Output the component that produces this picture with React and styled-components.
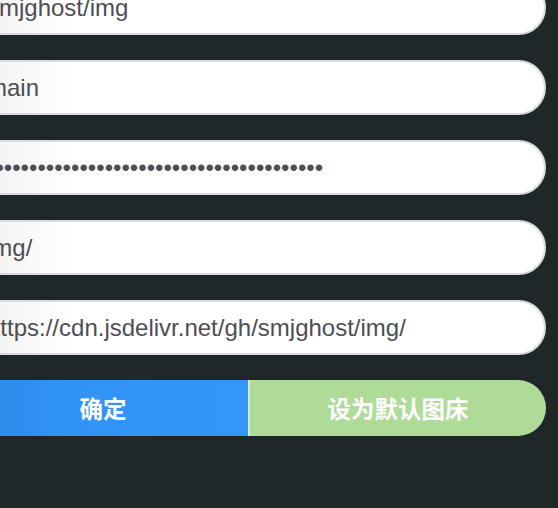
import React from "react";
import styled, { createGlobalStyle } from "styled-components";

const Global = createGlobalStyle`
  html, body {
    margin: 0;
    padding: 0;
    background: #1f2729;
    overflow: hidden;
  }
  body {
    width: 558px;
    height: 508px;
  }
`;

const Form = styled.div`
  display: flex;
  flex-direction: column;
  gap: 25px;
  width: 596px;
  margin: -20px 0 0 -50px;
`;

const Field = styled.input`
  box-sizing: border-box;
  display: block;
  width: 100%;
  height: 55px;
  margin: 0;
  padding: 0 0 0 35px;
  border: 2px solid #d8dbe2;
  border-radius: 0 28px 28px 0;
  background: linear-gradient(to right, #e6e6e6 0px, #f6f6f6 60px, #ffffff 120px);
  font-family: "Liberation Sans", Arial, sans-serif;
  font-size: 24px;
  color: #4e4e54;
  outline: none;
`;

const ButtonRow = styled.div`
  display: flex;
  height: 56px;
`;

const Button = styled.button`
  box-sizing: border-box;
  margin: 0;
  border: none;
  height: 100%;
  color: #ffffff;
  font-family: "Liberation Sans", "Noto Sans CJK SC", sans-serif;
  font-weight: bold;
  font-size: 23.5px;
  cursor: pointer;
`;

const ConfirmButton = styled(Button)`
  flex: 0 0 298px;
  padding: 0 0 0 8px;
  background: linear-gradient(to right, #2a86e2 0px, #3193f6 110px, #3396f8 100%);
`;

const DefaultButton = styled(Button)`
  flex: 1;
  padding: 0;
  background: #afdb98;
  border-left: 2px solid #d7eecb;
  border-radius: 0 28px 28px 0;
`;

const fields = [
  { type: "text", value: "smjghost/img" },
  { type: "text", value: "main" },
  { type: "password", value: "ghp_x1234567890abcdefghijklmnopqrstuvwxy" },
  { type: "text", value: "img/" },
  { type: "text", value: "https://cdn.jsdelivr.net/gh/smjghost/img/" },
];

export default function App() {
  return (
    <>
      <Global />
      <Form>
        {fields.map((f, i) => (
          <Field key={i} type={f.type} defaultValue={f.value} readOnly />
        ))}
        <ButtonRow>
          <ConfirmButton>确定</ConfirmButton>
          <DefaultButton>设为默认图床</DefaultButton>
        </ButtonRow>
      </Form>
    </>
  );
}
